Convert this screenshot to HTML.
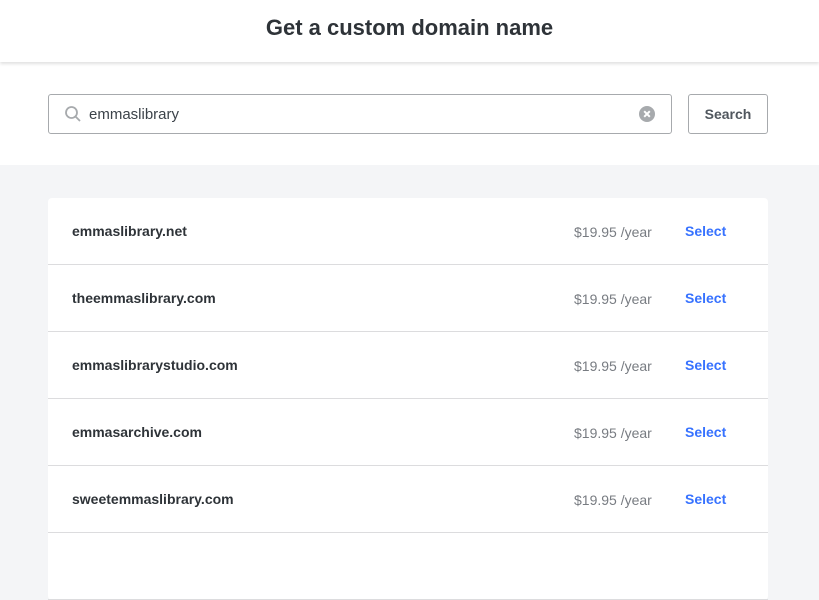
<!DOCTYPE html>
<html><head><style>
*{box-sizing:border-box;margin:0;padding:0}
body{width:819px;height:546px;overflow:hidden;background:#f4f5f7;font-family:"Liberation Sans",sans-serif;color:#2e3338}
.hdr{position:absolute;top:0;left:0;width:819px;height:62px;background:#fff;box-shadow:0 2px 3px rgba(0,0,0,.12);z-index:2;text-align:center;font-size:22px;font-weight:bold;line-height:56px;color:#2e3338}
.sr{position:absolute;top:62px;left:0;width:819px;height:103px;background:#fff}
.inp{position:absolute;left:48px;top:32px;width:624px;height:40px;border:1px solid #a7aaad;border-radius:3px}
.inp span{position:absolute;left:40px;top:11px;font-size:15px;color:#3c434a}
.btn{position:absolute;left:688px;top:32px;width:80px;height:40px;border:1px solid #a7aaad;border-radius:3px;text-align:center;line-height:38px;font-size:14px;font-weight:bold;color:#50575e}
.card{position:absolute;left:48px;top:198px;width:720px;background:#fff;border-radius:4px}
.row{height:67px;border-bottom:1px solid #dcdcde;position:relative}
.row b{position:absolute;left:24px;top:25px;font-size:14px;color:#2e3338}
.row .p{position:absolute;left:526px;top:26px;font-size:14px;color:#787c82}
.row .s{position:absolute;left:637px;top:25px;font-size:14px;font-weight:bold;color:#3772ff}
</style></head><body>
<div class="hdr">Get a custom domain name</div>
<div class="sr">
<div class="inp">
<svg style="position:absolute;left:15px;top:10px" width="18" height="18" viewBox="0 0 18 18"><circle cx="7.5" cy="7.5" r="5.5" fill="none" stroke="#a7aaad" stroke-width="1.8"/><line x1="11.5" y1="11.5" x2="16" y2="16" stroke="#a7aaad" stroke-width="1.8"/></svg>
<span>emmaslibrary</span>
<svg style="position:absolute;left:590px;top:11px" width="16" height="16" viewBox="0 0 16 16"><circle cx="8" cy="8" r="8" fill="#a7aaad"/><path d="M5.2 5.2L10.8 10.8M10.8 5.2L5.2 10.8" stroke="#fff" stroke-width="2"/></svg>
</div>
<div class="btn">Search</div>
</div>
<div class="card">
<div class="row"><b>emmaslibrary.net</b><span class="p">$19.95 /year</span><span class="s">Select</span></div>
<div class="row"><b>theemmaslibrary.com</b><span class="p">$19.95 /year</span><span class="s">Select</span></div>
<div class="row"><b>emmaslibrarystudio.com</b><span class="p">$19.95 /year</span><span class="s">Select</span></div>
<div class="row"><b>emmasarchive.com</b><span class="p">$19.95 /year</span><span class="s">Select</span></div>
<div class="row"><b>sweetemmaslibrary.com</b><span class="p">$19.95 /year</span><span class="s">Select</span></div>
<div class="row"></div>
</div>
</body></html>
